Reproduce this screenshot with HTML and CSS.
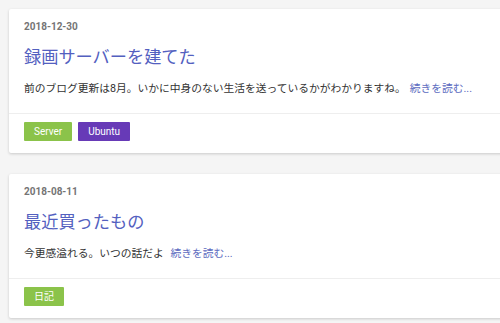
FILE: index.html
```html
<!DOCTYPE html>
<html lang="ja">
<head>
    <meta charset="UTF-8">
    <meta name="viewport" content="width=device-width, initial-scale=1.0">
    <title>ブログ</title>
    <link rel="stylesheet" href="styles.css">
</head>
<body>

<div class="posts">
    <!-- 記事 1 -->
    <div class="card">
        <div class="card-body">
            <div class="date">2018-12-30</div>
            <h2 class="title">録画サーバーを建てた</h2>
            <p class="excerpt">前のブログ更新は8月。いかに中身のない生活を送っているかがわかりますね。<a href="#" class="more">続きを読む...</a></p>
        </div>
        <div class="card-footer">
            <span class="tag tag-green">Server</span>
            <span class="tag tag-purple">Ubuntu</span>
        </div>
    </div>

    <!-- 記事 2 -->
    <div class="card">
        <div class="card-body">
            <div class="date">2018-08-11</div>
            <h2 class="title">最近買ったもの</h2>
            <p class="excerpt">今更感溢れる。いつの話だよ <a href="#" class="more">続きを読む...</a></p>
        </div>
        <div class="card-footer">
            <span class="tag tag-green">日記</span>
        </div>
    </div>
</div>

</body>
</html>
```

FILE: styles.css
```css
body {
    margin: 0;
    padding: 9px;
    background-color: #f5f5f5;
    font-family: Roboto, "Noto Sans CJK JP", sans-serif;
    overflow: hidden;
}
.posts {
    width: 520px;
}
.card {
    background: #fff;
    border-radius: 2px;
    box-shadow: 0 1px 3px rgba(0, 0, 0, 0.18);
    margin-bottom: 21px;
}
.card-body {
    padding: 10px 15px 14px;
}
.date {
    font-size: 10px;
    font-weight: bold;
    color: #757575;
    line-height: 16px;
}
.title {
    margin: 8px 0 0;
    font-size: 17.2px;
    font-weight: normal;
    line-height: 28px;
    color: #5360c0;
}
.excerpt {
    margin: 8px 0 0;
    font-size: 10.75px;
    line-height: 20px;
    color: #333;
}
.more {
    color: #5c6bc0;
    text-decoration: none;
    margin-left: 4px;
}
.card-footer {
    border-top: 1px solid #eee;
    padding: 8px 15px 12px;
    display: flex;
    gap: 6px;
}
.tag {
    display: inline-block;
    height: 19px;
    line-height: 19px;
    padding: 0 10px;
    font-size: 10px;
    color: #fff;
    border-radius: 1px;
}
.tag-green {
    background-color: #8bc34a;
}
.tag-purple {
    background-color: #673ab7;
}
```
